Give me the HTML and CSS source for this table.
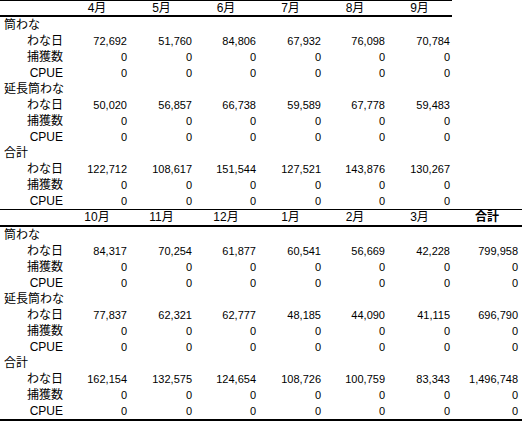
FILE: index.html
```html
<!DOCTYPE html>
<html lang="ja">
<head>
<meta charset="utf-8">
<link rel="stylesheet" href="styles.css">
</head>
<body>
<table class="sheet top">
<colgroup><col class="c65"><col class="c64"><col class="c65"><col class="c64"><col class="c65"><col class="c64"><col class="c65"></colgroup>
<thead><tr><th></th><th>4月</th><th>5月</th><th>6月</th><th>7月</th><th>8月</th><th>9月</th></tr></thead>
<tbody>
<tr><td class="grp">筒わな</td><td></td><td></td><td></td><td></td><td></td><td></td></tr>
<tr><td class="sub">わな日</td><td>72,692</td><td>51,760</td><td>84,806</td><td>67,932</td><td>76,098</td><td>70,784</td></tr>
<tr><td class="sub">捕獲数</td><td>0</td><td>0</td><td>0</td><td>0</td><td>0</td><td>0</td></tr>
<tr><td class="sub">CPUE</td><td>0</td><td>0</td><td>0</td><td>0</td><td>0</td><td>0</td></tr>
<tr><td class="grp">延長筒わな</td><td></td><td></td><td></td><td></td><td></td><td></td></tr>
<tr><td class="sub">わな日</td><td>50,020</td><td>56,857</td><td>66,738</td><td>59,589</td><td>67,778</td><td>59,483</td></tr>
<tr><td class="sub">捕獲数</td><td>0</td><td>0</td><td>0</td><td>0</td><td>0</td><td>0</td></tr>
<tr><td class="sub">CPUE</td><td>0</td><td>0</td><td>0</td><td>0</td><td>0</td><td>0</td></tr>
<tr><td class="grp">合計</td><td></td><td></td><td></td><td></td><td></td><td></td></tr>
<tr><td class="sub">わな日</td><td>122,712</td><td>108,617</td><td>151,544</td><td>127,521</td><td>143,876</td><td>130,267</td></tr>
<tr><td class="sub">捕獲数</td><td>0</td><td>0</td><td>0</td><td>0</td><td>0</td><td>0</td></tr>
<tr><td class="sub">CPUE</td><td>0</td><td>0</td><td>0</td><td>0</td><td>0</td><td>0</td></tr>
</tbody>
</table>
<table class="sheet bottom">
<colgroup><col class="c65"><col class="c64"><col class="c65"><col class="c64"><col class="c65"><col class="c64"><col class="c65"><col class="c70"></colgroup>
<thead><tr><th></th><th>10月</th><th>11月</th><th>12月</th><th>1月</th><th>2月</th><th>3月</th><th class="total">合計</th></tr></thead>
<tbody>
<tr><td class="grp">筒わな</td><td></td><td></td><td></td><td></td><td></td><td></td><td></td></tr>
<tr><td class="sub">わな日</td><td>84,317</td><td>70,254</td><td>61,877</td><td>60,541</td><td>56,669</td><td>42,228</td><td class="last">799,958</td></tr>
<tr><td class="sub">捕獲数</td><td>0</td><td>0</td><td>0</td><td>0</td><td>0</td><td>0</td><td class="last">0</td></tr>
<tr><td class="sub">CPUE</td><td>0</td><td>0</td><td>0</td><td>0</td><td>0</td><td>0</td><td class="last">0</td></tr>
<tr><td class="grp">延長筒わな</td><td></td><td></td><td></td><td></td><td></td><td></td><td></td></tr>
<tr><td class="sub">わな日</td><td>77,837</td><td>62,321</td><td>62,777</td><td>48,185</td><td>44,090</td><td>41,115</td><td class="last">696,790</td></tr>
<tr><td class="sub">捕獲数</td><td>0</td><td>0</td><td>0</td><td>0</td><td>0</td><td>0</td><td class="last">0</td></tr>
<tr><td class="sub">CPUE</td><td>0</td><td>0</td><td>0</td><td>0</td><td>0</td><td>0</td><td class="last">0</td></tr>
<tr><td class="grp">合計</td><td></td><td></td><td></td><td></td><td></td><td></td><td></td></tr>
<tr><td class="sub">わな日</td><td>162,154</td><td>132,575</td><td>124,654</td><td>108,726</td><td>100,759</td><td>83,343</td><td class="last">1,496,748</td></tr>
<tr><td class="sub">捕獲数</td><td>0</td><td>0</td><td>0</td><td>0</td><td>0</td><td>0</td><td class="last">0</td></tr>
<tr><td class="sub">CPUE</td><td>0</td><td>0</td><td>0</td><td>0</td><td>0</td><td>0</td><td class="last">0</td></tr>
</tbody>
</table>
</body>
</html>
```
FILE: styles.css
```css
html, body {
  margin: 0;
  padding: 0;
  background: #ffffff;
}
body {
  font-family: "Liberation Sans", "Noto Sans CJK JP", sans-serif;
  font-size: 11px;
  color: #000000;
}
.sheet {
  border-collapse: collapse;
  table-layout: fixed;
  border-spacing: 0;
}
.top { width: 452px; }
.bottom { width: 522px; }
.c64 { width: 64px; }
.c65 { width: 65px; }
.c70 { width: 70px; }
.sheet th, .sheet td {
  padding: 0;
  height: 16px;
  line-height: 16px;
  white-space: nowrap;
  overflow: visible;
}
.sheet thead tr {
  border-top: 1px solid #000;
  border-bottom: 2px solid #000;
}
.sheet th {
  height: 14px;
  line-height: 14px;
  font-weight: normal;
  font-size: 12px;
  text-align: center;
}
.bottom th {
  height: 15px;
  line-height: 15px;
}
.sheet th.total {
  font-weight: bold;
}
.sheet td {
  text-align: right;
  padding-right: 2px;
}
.sheet td.last {
  padding-right: 4px;
}
.sheet td.grp {
  text-align: left;
  padding-left: 4px;
  padding-right: 0;
  font-size: 12px;
}
.sheet td.sub {
  font-size: 12px;
  padding-right: 2px;
}
.bottom tbody tr:last-child {
  border-bottom: 2px solid #000;
}
```
